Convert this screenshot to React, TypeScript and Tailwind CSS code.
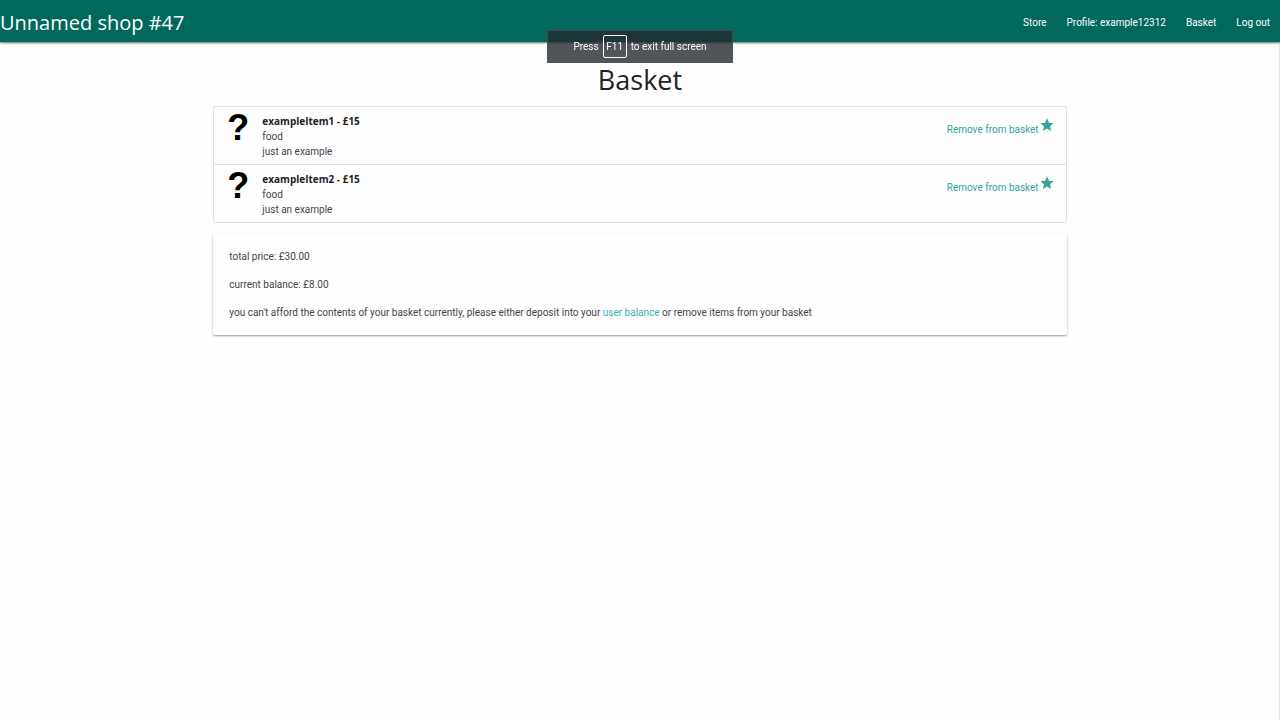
const items = [
  { name: 'exampleItem1', price: '£15', category: 'food', description: 'just an example' },
  { name: 'exampleItem2', price: '£15', category: 'food', description: 'just an example' },
];

const links = ['Store', 'Profile: example12312', 'Basket', 'Log out'];

function Star() {
  return (
    <svg viewBox="0 0 24 24" className="size-4 fill-[#35a497]" aria-hidden="true">
      <path d="M12 17.27L18.18 21l-1.64-7.03L22 9.24l-7.19-.61L12 2 9.19 8.63 2 9.24l5.46 4.73L5.82 21z" />
    </svg>
  );
}

export default function App() {
  return (
    <div className="min-h-screen bg-[#fefefe] font-['Roboto','Open_Sans',sans-serif] text-[10px] text-[#444] shadow-[inset_-1px_0_1px_#e4e4e4]">
      <nav className="flex h-[42px] items-center justify-between bg-[#00695c] text-white shadow-[0_1px_2px_rgba(0,0,0,0.6)]">
        <a href="#" className="pt-1 font-['Open_Sans',sans-serif] text-xl leading-10">
          Unnamed shop #47
        </a>
        <ul className="flex pt-1">
          {links.map((link) => (
            <li key={link}>
              <a href="#" className="block px-2.5 leading-10">
                {link}
              </a>
            </li>
          ))}
        </ul>
      </nav>

      <div className="fixed top-[30px] left-1/2 flex h-[33px] w-[186px] -translate-x-1/2 items-center justify-center gap-1 border border-[#55585b]/60 bg-[#26292e]/80 text-white">
        <span>Press</span>
        <kbd className="flex h-[23px] w-6 items-center justify-center rounded-xs border border-white font-['Roboto','Open_Sans',sans-serif]">
          F11
        </kbd>
        <span>to exit full screen</span>
      </div>

      <main className="mx-auto w-2/3">
        <h1 className="pt-5 pb-2 text-center font-['Open_Sans',sans-serif] text-[27px] leading-9 text-[#222]">
          Basket
        </h1>
        <ul className="rounded-xs border border-[#e0e0e0]">
          {items.map((item) => (
            <li
              key={item.name}
              className="flex justify-between border-b border-[#e0e0e0] pt-[7px] pr-[11px] pb-[5px] pl-[13px] last:border-b-0"
            >
              <div className="flex gap-3.5">
                <span className="w-[21px] font-['Liberation_Sans',sans-serif] text-[36px] leading-7 font-bold text-black">
                  ?
                </span>
                <div className="leading-[15px]">
                  <h2 className="font-['Open_Sans',sans-serif] font-bold text-[#222]">
                    {item.name} - {item.price}
                  </h2>
                  <p>{item.category}</p>
                  <p>{item.description}</p>
                </div>
              </div>
              <a href="#" className="flex items-start pt-[3px] text-[#35a497]">
                <span className="pt-[5px] leading-4">Remove from basket</span>
                <Star />
              </a>
            </li>
          ))}
        </ul>

        <section className="mt-2.5 flex flex-col gap-3 rounded-xs px-4 pt-4 pb-3.5 leading-4 shadow-[0_1px_2px_rgba(0,0,0,0.4)]">
          <p>total price: £30.00</p>
          <p>current balance: £8.00</p>
          <p>
            you can't afford the contents of your basket currently, please either deposit into your{' '}
            <a href="#" className="text-[#35b0b5]">
              user balance
            </a>{' '}
            or remove items from your basket
          </p>
        </section>
      </main>
    </div>
  );
}
